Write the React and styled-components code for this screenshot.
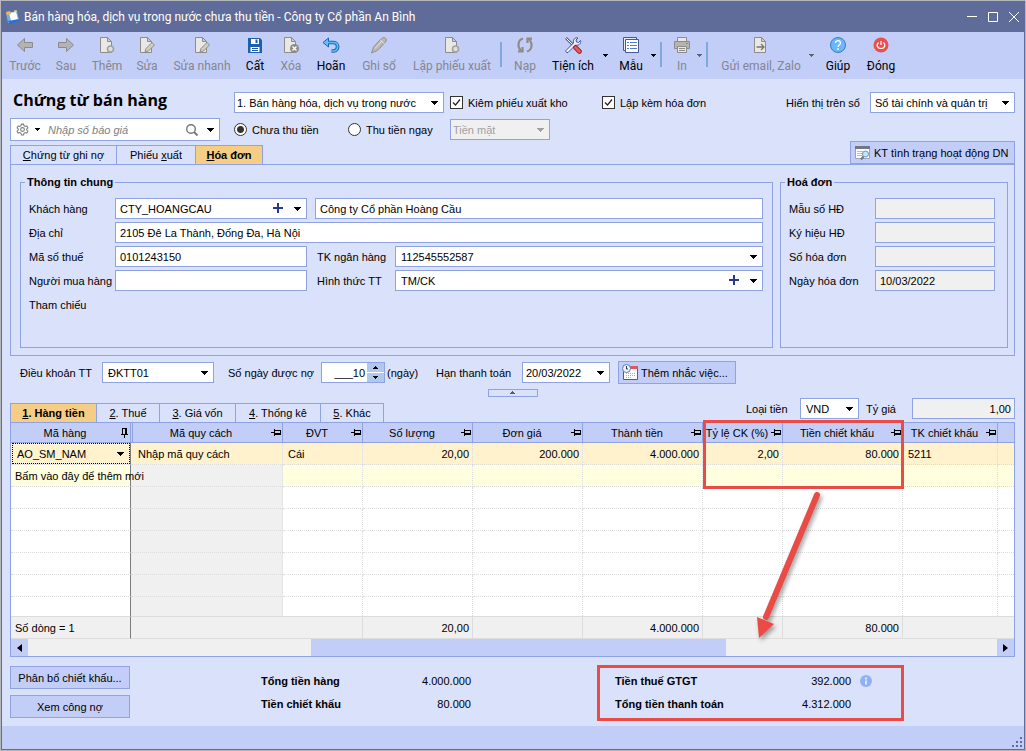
import React from 'react';
import styled, { createGlobalStyle, css } from 'styled-components';

const line = '#8fa3e2';
const bar = '#c2cef8';
const page = '#dae1fb';
const frame = '#5f6c99';
const marker = '#ea4b46';

const GlobalStyle = createGlobalStyle`
	*, *::before, *::after {
		box-sizing: border-box;
	}

	body {
		margin: 0;
		font-family: 'Liberation Sans', Arial, sans-serif;
		font-size: 11px;
		line-height: 14px;
		color: #000000;
	}

	button, input, select {
		margin: 0;
		padding: 0;
		border: 0;
		border-radius: 0;
		background: none;
		font: inherit;
		color: inherit;
	}
`;

// Window
const Outline = styled.div`
	min-height: 100vh;
	display: flex;
	border: 1px solid #b4b8bc;
`;

const Window = styled.div`
	flex: 1;
	min-width: 0;
	display: flex;
	flex-direction: column;
	border: 1px solid ${frame};
	background-color: ${page};
`;

const TitleBar = styled.header`
	height: 30px;
	display: flex;
	align-items: center;
	padding-left: 3px;
	background-color: ${frame};
	color: #ffffff;
	font-family: Roboto, sans-serif;
	font-size: 12px;
`;

const TitleText = styled.div`
	flex: 1;
	padding-left: 3px;
	white-space: nowrap;
`;

const WindowButton = styled.button`
	width: 21px;
	height: 24px;
	display: flex;
	align-items: center;
	justify-content: center;
`;

const StatusBar = styled.footer`
	height: 23px;
	margin-top: auto;
	display: flex;
	align-items: flex-end;
	justify-content: flex-end;
	background-color: ${bar};
`;

// Toolbar
const Toolbar = styled.nav`
	height: 47px;
	display: flex;
	padding-left: 1px;
	background-color: ${bar};
`;

const ToolButton = styled.button`
	width: ${props => props.$width}px;
	margin-left: ${props => (props.$spaced ? 4 : 0)}px;
	flex-shrink: 0;
	display: flex;
	flex-direction: column;
	align-items: center;
	gap: 4px;
	padding-top: 4px;
	font-family: Roboto, sans-serif;
	font-size: 12px;
	line-height: 16px;
	white-space: nowrap;
	color: ${props => (props.disabled ? '#85868f' : '#000000')};
`;

const ToolArrow = styled.button`
	width: 8px;
	flex-shrink: 0;
	display: flex;
	justify-content: center;
	padding-top: 22px;
	color: ${props => (props.disabled ? '#5d6570' : '#000000')};
`;

const ToolDivider = styled.div`
	width: 2px;
	height: 25px;
	margin: 10px 3px;
	flex-shrink: 0;
	background-color: #7fa8dc;
`;

// Form parts
const Content = styled.main`
	padding: 13px 9px 5px 8px;
`;

const Header = styled.div`
	display: grid;
	grid-template-columns: 210px 1fr;
	grid-template-rows: 21px 23px;
	gap: 5px 14px;
`;

const Heading = styled.h1`
	margin: 0 0 0 3px;
	font-family: 'Open Sans', sans-serif;
	font-size: 16px;
	font-weight: 700;
	line-height: 16px;
	white-space: nowrap;
`;

const HeaderRow = styled.div`
	display: flex;
	align-items: center;
`;

const Check = styled.label`
	width: ${props => props.$width}px;
	display: flex;
	align-items: center;
	gap: 5px;
	white-space: nowrap;
`;

const CheckBox = styled.input.attrs({ type: 'checkbox' })`
	appearance: none;
	width: 13px;
	height: 13px;
	margin-left: 6px;
	border: 1px solid #333333;
	background-color: #ffffff;
`;

const CheckMark = styled.span`
	position: relative;
	display: flex;

	svg {
		position: absolute;
		left: 8px;
		top: 2px;
		visibility: hidden;
		pointer-events: none;
	}

	input:checked + svg {
		visibility: visible;
	}
`;

const Radio = styled.input.attrs({ type: 'radio' })`
	appearance: none;
	width: 13px;
	height: 13px;
	border: 1px solid #333333;
	border-radius: 50%;
	background-color: #ffffff;

	&:checked {
		background-image: radial-gradient(circle, #333333 0 3px, transparent 4px);
	}
`;

const Box = styled.div`
	position: relative;
	height: 21px;
	width: ${props => (props.$width ? `${props.$width}px` : 'auto')};
	flex-shrink: 0;
	display: flex;
	border: 1px solid ${line};
	background-color: ${props => (props.$disabled ? '#f0f0f0' : '#ffffff')};
	color: ${props => (props.$disabled ? '#a0a0a0' : '#000000')};
`;

const Select = styled.select`
	appearance: none;
	flex: 1;
	min-width: 0;
	padding-left: ${props => props.$indent || 4}px;
	opacity: 1;
	outline: none;
`;

const BoxInput = styled.input`
	flex: 1;
	min-width: 0;
	padding-right: 2px;
	text-align: right;
	outline: none;
`;

const BoxArrow = styled.span`
	position: absolute;
	right: 5px;
	top: 8px;
	display: flex;
	pointer-events: none;
`;

const PlusButton = styled.button`
	position: absolute;
	right: 21px;
	top: 3px;
	width: 13px;
	height: 13px;
	display: flex;
	align-items: center;
	justify-content: center;
`;

const Input = styled.input`
	height: 21px;
	width: ${props => (props.$width ? `${props.$width}px` : '100%')};
	min-width: 0;
	padding: 0 3px 0 4px;
	border: 1px solid ${line};
	background-color: ${props => (props.readOnly ? '#f0f0f0' : '#ffffff')};
	text-align: ${props => props.$align || 'left'};
	outline: none;
`;

const SearchBox = styled.div`
	display: flex;
	align-items: center;
	padding: 0 5px;
	border: 1px solid ${line};
	background-color: #ffffff;

	input {
		flex: 1;
		min-width: 0;
		padding-left: 7px;
		font-style: italic;
		outline: none;
	}

	input::placeholder {
		color: #808080;
	}

	button {
		display: flex;
		align-items: center;
		height: 21px;
		padding-right: 5px;
	}

	button:last-child {
		padding: 0 0 0 3px;
	}
`;

const TabBar = styled.div`
	display: flex;
	align-items: flex-end;
	justify-content: space-between;
	height: ${props => props.$height}px;
	margin-top: 1px;
`;

const Tabs = styled.div`
	display: flex;
	border-left: 1px solid ${line};
`;

const Tab = styled.button`
	width: ${props => props.$width}px;
	height: 19px;
	border-top: 1px solid ${line};
	border-right: 1px solid ${line};
	text-align: center;
	white-space: nowrap;
	${props =>
		props.$active &&
		css`
			background-color: #f6cd85;
			font-weight: 700;
		`}
`;

const PushButton = styled.button`
	height: 23px;
	width: ${props => props.$width}px;
	flex-shrink: 0;
	display: flex;
	align-items: center;
	justify-content: ${props => (props.$icon ? 'flex-start' : 'center')};
	gap: 2px;
	padding-left: ${props => (props.$icon ? 3 : 0)}px;
	border: 1px solid ${line};
	background-color: ${bar};
	white-space: nowrap;
`;

const Panel = styled.section`
	display: flex;
	gap: 7px;
	padding: 10px 6px 7px 9px;
	border: 1px solid ${line};
`;

const Group = styled.fieldset`
	min-width: 0;
	flex: ${props => (props.$width ? `0 0 ${props.$width}px` : 1)};
	margin: 0;
	padding: 9px 9px 32px 8px;
	border: 1px solid ${line};
`;

const GroupTitle = styled.legend`
	margin-left: -4px;
	padding: 0 2px;
	font-weight: 700;
`;

const Fields = styled.div`
	display: grid;
	grid-template-columns: ${props => props.$columns};
	grid-auto-rows: 21px;
	row-gap: 3px;
	align-items: center;
`;

const Label = styled.label`
	width: ${props => (props.$width ? `${props.$width}px` : 'auto')};
	padding-left: ${props => (props.$second ? 10 : 0)}px;
	flex-shrink: 0;
	white-space: nowrap;
`;

const Wide = styled.div`
	display: flex;
	grid-column: ${props => props.$from} / -1;
	margin-left: ${props => (props.$from === 3 ? 8 : 0)}px;
`;

const TermsRow = styled.div`
	display: flex;
	align-items: center;
	height: 23px;
	margin-top: 5px;
	padding-left: 10px;
`;

const Space = styled.span`
	width: ${props => props.$width}px;
	flex-shrink: 0;
`;

const Push = styled.span`
	flex: 1;
`;

const Steppers = styled.div`
	width: 17px;
	display: flex;
	flex-direction: column;
	gap: 1px;

	button {
		flex: 1;
		display: flex;
		align-items: center;
		justify-content: center;
		background-color: #b0c8ee;
	}
`;

const Collapse = styled.button`
	width: 50px;
	height: 8px;
	display: flex;
	align-items: center;
	justify-content: center;
	margin: 5px auto 0;
	border: 1px solid ${line};
	color: #555e66;
`;

const Currency = styled.div`
	display: flex;
	align-items: center;
	align-self: flex-start;
`;

// Item grid
const GridFrame = styled.div`
	position: relative;
	border: 1px solid ${line};
	background-color: #ffffff;
`;

const Table = styled.table`
	width: 100%;
	table-layout: fixed;
	border-collapse: separate;
	border-spacing: 0;

	th, td {
		padding: 0;
		white-space: nowrap;
	}
`;

const HeadCell = styled.th`
	height: 20px;
	border-right: ${props => (props.$last ? 0 : 1)}px solid ${line};
	border-bottom: 1px solid ${line};
	background-color: ${bar};
	font-weight: 400;
	${props => props.$second && `box-shadow: inset 1px 0 ${bar}, inset 2px 0 ${line};`}

	div {
		display: flex;
		align-items: center;
	}

	span {
		flex: 1;
		min-width: 0;
	}

	svg {
		flex-shrink: 0;
	}
`;

const rowColors = { active: '#fff2cd', fresh: '#ffffe0', empty: '#ffffff' };

const Cell = styled.td`
	height: ${props => (props.$short ? 19 : 22)}px;
	border-right: ${props => (props.$last ? 0 : 1)}px ${props => (props.$frozen ? 'solid #7c7c7c' : 'dotted #dcdcdc')};
	border-bottom: ${props => (props.$short ? 0 : 1)}px dotted #dcdcdc;
	background-color: ${props => (props.$gray ? '#f0f0f0' : rowColors[props.$kind])};
	text-align: ${props => props.$align || 'left'};

	&& {
		padding: 0 ${props => (props.$picker ? 0 : 3)}px 0 ${props => props.$indent || 5}px;
	}
`;

const ItemPicker = styled.div`
	position: relative;
	height: 21px;
	display: flex;
	border: 1px dotted #000000;
`;

const FootCell = styled.td`
	height: 23px;
	border-top: 1px solid #dcdcdc;
	border-bottom: 1px solid #dcdcdc;
	border-right: ${props => (props.$plain ? '0' : '1px')} solid ${props => (props.$frozen ? '#7c7c7c' : '#dcdcdc')};
	background-color: #f0f0f0;
	text-align: ${props => (props.$frozen ? 'left' : 'right')};

	&& {
		padding: 0 3px 0 4px;
	}
`;

const ScrollBar = styled.div`
	display: flex;
	height: 17px;
	background-color: #f0f0f0;

	button {
		width: 17px;
		display: flex;
		align-items: center;
		justify-content: center;
		background-color: ${bar};
	}
`;

const ScrollTrack = styled.div`
	flex: 1;
	display: grid;
	grid-template-columns: 283fr 415fr 271fr;
`;

const ScrollThumb = styled.div`
	grid-column: 2;
	background-color: ${bar};
`;

// Marks drawn over the grid
const Highlight = styled.div`
	position: absolute;
	left: 692px;
	top: -3px;
	width: 201px;
	height: 69px;
	border: 3px solid ${marker};
	pointer-events: none;
`;

const Pointer = styled.svg`
	position: absolute;
	left: 739px;
	top: 64px;
	pointer-events: none;
	filter: drop-shadow(2px 3px 2px rgba(0, 0, 0, 0.35));
`;

// Totals
const Summary = styled.div`
	display: flex;
	margin-top: 8px;
`;

const Actions = styled.div`
	width: 251px;
	display: flex;
	flex-direction: column;
	gap: 6px;
	padding-top: 1px;
`;

const Totals = styled.dl`
	width: ${props => (props.$marked ? 307 : 210)}px;
	margin: 0 ${props => (props.$marked ? 0 : 126)}px 0 0;
	padding: ${props => (props.$marked ? '1px 26px 3px 15px' : '4px 0 6px')};
	border: ${props => (props.$marked ? `3px solid ${marker}` : '0')};
`;

const Total = styled.div`
	display: flex;
	align-items: center;
	height: 23px;

	dt {
		flex: 1;
		font-weight: 700;
	}

	dd {
		margin: 0 ${props => (props.$marked ? 9 : 0)}px 0 0;
	}
`;

const InfoSlot = styled.span`
	width: 15px;
	display: flex;
`;

// Icons
const Down = ({ small }) => (
	<svg width="7" height="4" viewBox="0 0 7 4" shapeRendering="crispEdges">
		<path d={small ? 'M1 0h5v1h-1v1h-1v1h-1v-1h-1v-1h-1z' : 'M0 0h7v1h-1v1h-1v1h-1v1h-1v-1h-1v-1h-1v-1h-1z'} fill="currentColor" />
	</svg>
);

const Up = () => (
	<svg width="7" height="4" viewBox="0 0 7 4" shapeRendering="crispEdges">
		<path d="M3 0h1v1h1v1h1v1h-5v-1h1v-1h1z" fill="currentColor" />
	</svg>
);

const Plus = () => (
	<svg width="11" height="11" viewBox="0 0 11 11" shapeRendering="crispEdges">
		<path d="M0 4h4V0h2v4h4v2H6v4H4V6H0z" fill="#24398c" />
	</svg>
);

const Pin = ({ fixed }) => (
	<svg width="11" height="11" viewBox="0 0 11 11" shapeRendering="crispEdges">
		<g transform={fixed ? 'rotate(-90 5.5 5.5)' : undefined} fill="#000000">
			<path d="M0 5h4v1H0zM3 2h1v7H3zM4 3h6v1H4zM9 3h1v5H9zM4 6h6v2H4z" />
		</g>
	</svg>
);

const PageBase = () => (
	<path d="M2.500 1.500h7l4 4v11h-11zM9.500 1.500v4h4" fill="#e9e8e4" stroke="#8d8c88" />
);

const icons = {
	back: <path d="M1.500 9L8.500 2.500v4h8v5h-8v4z" fill="#b3b3b3" stroke="#8b8b8b" />,
	next: <path d="M16.500 9L9.500 2.500v4h-8v5h8v4z" fill="#b3b3b3" stroke="#8b8b8b" />,
	add: (
		<>
			<PageBase />
			<circle cx="12.500" cy="13" r="3" fill="#dedede" stroke="#a2a2a2" strokeWidth="1.600" />
		</>
	),
	edit: (
		<>
			<PageBase />
			<path d="M7 16l1-3.500 6-6 2.500 2.500-6 6z" fill="#cfcdc6" stroke="#908e88" />
		</>
	),
	save: (
		<>
			<path d="M2 2h12l2 2v13H2z" fill="#1d5fae" />
			<path d="M5 3h8v5H5zM4.500 11h9v5h-9z" fill="#ffffff" />
			<path d="M9.500 3.500h2v3.500h-2zM6 12h6v1H6zM6 14h6v1H6z" fill="#1d5fae" />
		</>
	),
	remove: (
		<>
			<PageBase />
			<circle cx="12.500" cy="12.500" r="4.500" fill="#8c8b87" />
			<path d="M10.500 10.500l4 4m0-4l-4 4" stroke="#ffffff" strokeWidth="1.300" />
		</>
	),
	undo: (
		<>
			<path d="M3 6.500h8.500c5.500 0 5.500 8.500 0 8.500h-2" fill="none" stroke="#1567bd" strokeWidth="3.600" />
			<path d="M1 6.500L6.500 2v9z" fill="#6bbcf2" stroke="#1567bd" />
			<path d="M5 6.500h6.500c5.500 0 5.500 8.500 0 8.500h-1.500" fill="none" stroke="#6bbcf2" strokeWidth="1.600" />
		</>
	),
	pen: (
		<>
			<path d="M1.500 17l2-6 8-8.500c3-2.500 6.500.500 4 3.500l-8 8.500z" fill="#b9b8b5" stroke="#92918d" />
			<path d="M5 12.500l7-7.500M10.500 4l3.500 3.500" stroke="#e5e4e1" />
		</>
	),
	reload: (
		<g fill="none" stroke="#8d8c86" strokeWidth="2.200">
			<path d="M7 2.500C1.500 4 1 11.500 5.500 15M11 15.500C16.500 14 17 6.500 12.500 3" />
			<path d="M2 15.300h4.500V11M16 2.700h-4.500V7" />
		</g>
	),
	tools: (
		<>
			<path d="M2 2l9 9" stroke="#5b5f9e" strokeWidth="2.600" />
			<path d="M2.500 2.500l8.500 8.500" stroke="#ffffff" />
			<path d="M2 14.500l7.500-7.500c-1-3 1.500-6 4.500-5l-2 2 .5 2 2 .5 2-2c1 3-2 5.500-5 4.500l-7.500 7.500c-1.500.5-2.500-.5-2-2z" fill="#eef1ff" stroke="#4b5193" />
			<path d="M11.500 11.500l4 4" stroke="#9d2525" strokeWidth="4.600" strokeLinecap="round" />
			<path d="M11.500 11.500l4 4" stroke="#ee5a52" strokeWidth="2.600" strokeLinecap="round" />
		</>
	),
	form: (
		<>
			<path d="M1.500 1.500h13v13h-13z" fill="#e6eaff" stroke="#4c5594" />
			<path d="M3.500 3.500h13v13h-13z" fill="#ffffff" stroke="#4c5594" />
			<path d="M5 6.500h2M5 9.500h2M5 12.500h2M8 6.500h7M8 9.500h7M8 12.500h7" stroke="#4c7fd0" />
		</>
	),
	print: (
		<>
			<path d="M4.500 1.500h9v5h-9z" fill="#e9e8e4" stroke="#8d8c88" />
			<path d="M1.500 5.500h15v7h-15z" fill="#b5b4b0" stroke="#8d8c88" />
			<path d="M4.500 10.500h9v6h-9z" fill="#e9e8e4" stroke="#8d8c88" />
			<path d="M6 12.500h6M6 14.500h6M13 7.500h2" stroke="#8d8c88" />
		</>
	),
	send: (
		<>
			<PageBase />
			<path d="M4.500 11h7M9 8l3 3-3 3" fill="none" stroke="#77766f" strokeWidth="1.300" />
		</>
	),
	help: (
		<>
			<circle cx="9" cy="9" r="7.500" fill="#6db7f8" stroke="#2d7fd0" />
			<path d="M6.500 7c0-3.300 5-3.300 5 0 0 2-2.500 2-2.500 4" fill="none" stroke="#ffffff" strokeWidth="1.300" />
			<circle cx="9" cy="13" r=".9" fill="#ffffff" />
		</>
	),
	close: (
		<>
			<circle cx="9" cy="9" r="7.500" fill="#ea4f4c" />
			<path d="M6.500 6.500c-3 3-.5 6 2.500 6s5.500-3 2.500-6M9 5v4" fill="none" stroke="#ffffff" strokeWidth="1.200" />
		</>
	),
};

const ToolIcon = ({ name }) => (
	<svg width="18" height="18" viewBox="0 0 18 18">
		{icons[name]}
	</svg>
);

const AppIcon = () => (
	<svg width="16" height="16" viewBox="0 0 16 16">
		<path d="M1 4l11-2 2 9-11 3z" fill="#74aee8" />
		<path d="M3 12l10-2 2 2-10 3z" fill="#2e6fd0" />
		<path d="M4 4l7-1 2 7-7 1.500z" fill="#ffffff" />
		<path d="M1 3l4-1 1 3-4 1z" fill="#f3b73b" />
		<path d="M9 1.500l2.500-.5.5 2-2.500.5z" fill="#f6d56c" />
	</svg>
);

const Gear = () => (
	<svg width="13" height="13" viewBox="0 0 24 24" fill="none" stroke="#7d7d7d" strokeWidth="2">
		<path d="M10 2h4l.7 3 2.300 1.300L20 5.400l2 3.500L19.800 11v2l2.200 2.100-2 3.500-3-.9-2.300 1.300-.7 3h-4l-.7-3L7 17.700l-3 .9-2-3.500L4.200 13v-2L2 8.900l2-3.500 3 .9L9.300 5z" />
		<circle cx="12" cy="12" r="3.500" />
	</svg>
);

const Magnifier = () => (
	<svg width="14" height="14" viewBox="0 0 14 14" fill="none" stroke="#777777" strokeWidth="1.400">
		<circle cx="6" cy="6" r="4.300" />
		<path d="M9 9l3.500 3.500" strokeWidth="1.800" />
	</svg>
);

const CheckSheet = () => (
	<svg width="18" height="16" viewBox="0 0 18 16">
		<path d="M1.500 2.500h14v11h-14z" fill="#ffffff" stroke="#9aa3b5" />
		<path d="M1 1h15v3H1z" fill="#707786" />
		<path d="M3 6.500h6M3 8.500h6M3 10.500h5" stroke="#9cc0e8" />
		<circle cx="11.500" cy="9" r="3" fill="#c9e4fa" stroke="#6a96c0" />
		<path d="M9.500 11.500L7 14.500" stroke="#6f7682" strokeWidth="2" />
	</svg>
);

const Reminder = () => (
	<svg width="17" height="17" viewBox="0 0 17 17">
		<path d="M1.500 3.500h14v12h-14z" fill="#ffffff" stroke="#53588e" />
		<path d="M8 2h8v3H8z" fill="#e2574f" />
		<path d="M4 9.500h10M4 11.500h10M4 13.500h6" stroke="#a5acb8" strokeDasharray="1 1" />
		<circle cx="4.500" cy="4.500" r="4" fill="#eef4ff" stroke="#5f79ad" />
		<path d="M4.500 2v3H6" fill="none" stroke="#27365c" />
	</svg>
);

const Info = () => (
	<svg width="12" height="12" viewBox="0 0 12 12">
		<circle cx="6" cy="6" r="6" fill="#8fb0f2" />
		<path d="M5 2.500h2v2H5zM5 5.500h2v4H5z" fill="#dfe8ff" />
	</svg>
);

const Grip = () => (
	<svg width="12" height="12" viewBox="0 0 12 12" fill="#5f6c99" shapeRendering="crispEdges">
		<path d="M8 0h2v2H8zM4 4h2v2H4zM8 4h2v2H8zM0 8h2v2H0zM4 8h2v2H4zM8 8h2v2H8z" />
	</svg>
);

const Combo = ({ id, label, value, width, indent, disabled, plus }) => (
	<Box $width={width} $disabled={disabled}>
		<Select id={id} aria-label={label} disabled={disabled} $indent={indent}>
			<option>{value}</option>
		</Select>
		{plus && (
			<PlusButton aria-label="Thêm">
				<Plus />
			</PlusButton>
		)}
		<BoxArrow>
			<Down />
		</BoxArrow>
	</Box>
);

const Tick = ({ width, children }) => (
	<Check $width={width}>
		<CheckMark>
			<CheckBox defaultChecked />
			<svg width="9" height="9" viewBox="0 0 9 9">
				<path d="M1 4.500L3.500 7 8 1.500" fill="none" stroke="#222222" strokeWidth="1.200" />
			</svg>
		</CheckMark>
		{children}
	</Check>
);

const tools = [
	{ icon: 'back', text: 'Trước', width: 44, off: true },
	{ icon: 'next', text: 'Sau', width: 38, off: true },
	{ icon: 'add', text: 'Thêm', width: 44, off: true },
	{ icon: 'edit', text: 'Sửa', width: 36, off: true },
	{ icon: 'edit', text: 'Sửa nhanh', width: 74, off: true },
	{ icon: 'save', text: 'Cất', width: 32 },
	{ icon: 'remove', text: 'Xóa', width: 40, off: true },
	{ icon: 'undo', text: 'Hoãn', width: 40 },
	{ icon: 'pen', text: 'Ghi sổ', width: 56, off: true },
	{ icon: 'add', text: 'Lập phiếu xuất', width: 90, off: true, divider: true },
	{ icon: 'reload', text: 'Nạp', width: 40, off: true },
	{ icon: 'tools', text: 'Tiện ích', width: 56, menu: true },
	{ icon: 'form', text: 'Mẫu', width: 36, menu: true, divider: true, spaced: true },
	{ icon: 'print', text: 'In', width: 26, off: true, menu: true, divider: true, spaced: true },
	{ icon: 'send', text: 'Gửi email, Zalo', width: 92, off: true, menu: true, spaced: true },
	{ icon: 'help', text: 'Giúp', width: 46 },
	{ icon: 'close', text: 'Đóng', width: 40 },
];

const detailTabs = [
	{ key: '1', text: '. Hàng tiền', width: 86 },
	{ key: '2', text: '. Thuế', width: 63 },
	{ key: '3', text: '. Giá vốn', width: 76 },
	{ key: '4', text: '. Thống kê', width: 85 },
	{ key: '5', text: '. Khác', width: 63 },
];

// value: first row, total: footer row
const columns = [
	{ name: 'Mã hàng', width: 120, total: 'Số dòng = 1' },
	{ name: 'Mã quy cách', width: 152, value: 'Nhập mã quy cách', indent: 7 },
	{ name: 'ĐVT', width: 80, value: 'Cái' },
	{ name: 'Số lượng', width: 110, value: '20,00', total: '20,00', align: 'right' },
	{ name: 'Đơn giá', width: 110, value: '200.000', align: 'right' },
	{ name: 'Thành tiền', width: 120, value: '4.000.000', total: '4.000.000', align: 'right' },
	{ name: 'Tỷ lệ CK (%)', width: 80, value: '2,00', align: 'right' },
	{ name: 'Tiền chiết khấu', width: 120, value: '80.000', total: '80.000', align: 'right' },
	{ name: 'TK chiết khấu', width: 95, value: '5211' },
	{ name: '' },
];

const rows = ['active', 'fresh', 'empty', 'empty', 'empty', 'empty', 'empty', 'empty'];

const cellContent = (column, index, kind) => {
	if (kind === 'active' && index > 0) return column.value;
	if (kind === 'fresh' && index === 0) return 'Bấm vào đây để thêm mới';
	return null;
};

const ItemGrid = () => (
	<GridFrame>
		<Table>
			<colgroup>
				{columns.map(column => (
					<col key={column.name} width={column.width} />
				))}
			</colgroup>
			<thead>
				<tr>
					{columns.map((column, index) => (
						<HeadCell key={column.name} $second={index === 1} $last={!column.name}>
							{column.name && (
								<div>
									<span>{column.name}</span>
									<Pin fixed={index === 0} />
								</div>
							)}
						</HeadCell>
					))}
				</tr>
			</thead>
			<tbody>
				{rows.map((kind, row) => (
					<tr key={row}>
						{columns.map((column, index) => {
							const picker = kind === 'active' && index === 0;
							return (
								<Cell
									key={column.name}
									$kind={kind}
									$frozen={index === 0}
									$gray={index === 1 && kind !== 'active'}
									$short={row === rows.length - 1}
									$last={!column.name}
									$align={column.align}
									$indent={index === 0 ? (picker ? 1 : 4) : column.indent}
									$picker={picker}
								>
									{picker ? (
										<ItemPicker>
											<Select aria-label="Mã hàng" $indent={4}>
												<option>AO_SM_NAM</option>
											</Select>
											<BoxArrow>
												<Down />
											</BoxArrow>
										</ItemPicker>
									) : (
										cellContent(column, index, kind)
									)}
								</Cell>
							);
						})}
					</tr>
				))}
			</tbody>
			<tfoot>
				<tr>
					{columns.map((column, index) => (
						<FootCell key={column.name} $frozen={index === 0} $plain={index === 1 || index > 7}>
							{column.total}
						</FootCell>
					))}
				</tr>
			</tfoot>
		</Table>
		<ScrollBar>
			<button aria-label="Cuộn trái">
				<svg width="5" height="8" viewBox="0 0 5 8">
					<path d="M5 0v8L0 4z" />
				</svg>
			</button>
			<ScrollTrack>
				<ScrollThumb />
			</ScrollTrack>
			<button aria-label="Cuộn phải">
				<svg width="5" height="8" viewBox="0 0 5 8">
					<path d="M0 0v8l5-4z" />
				</svg>
			</button>
		</ScrollBar>
		<Highlight />
		<Pointer width="80" height="160" viewBox="0 0 80 160">
			<path d="M67 8L16 130" stroke={marker} strokeWidth="6" strokeLinecap="round" />
			<path d="M9 151L7 130l17 7z" fill={marker} />
		</Pointer>
	</GridFrame>
);

const App = () => (
	<>
		<GlobalStyle />
		<Outline>
			<Window>
				<TitleBar>
					<AppIcon />
					<TitleText>Bán hàng hóa, dịch vụ trong nước chưa thu tiền - Công ty Cổ phần An Bình</TitleText>
					<WindowButton aria-label="Thu nhỏ">
						<svg width="10" height="10" viewBox="0 0 10 10">
							<path d="M0 4.500h10" stroke="#ffffff" />
						</svg>
					</WindowButton>
					<WindowButton aria-label="Phóng to">
						<svg width="10" height="10" viewBox="0 0 10 10">
							<path d="M.5.5h9v9h-9z" fill="none" stroke="#ffffff" />
						</svg>
					</WindowButton>
					<WindowButton aria-label="Đóng cửa sổ">
						<svg width="10" height="10" viewBox="0 0 10 10">
							<path d="M0 0l10 10M10 0L0 10" stroke="#ffffff" />
						</svg>
					</WindowButton>
				</TitleBar>

				<Toolbar>
					{tools.map(tool => (
						<React.Fragment key={tool.text}>
							<ToolButton $width={tool.width} $spaced={tool.spaced} disabled={tool.off}>
								<ToolIcon name={tool.icon} />
								{tool.text}
							</ToolButton>
							{tool.menu && (
								<ToolArrow disabled={tool.off} aria-label={tool.text}>
									<Down small />
								</ToolArrow>
							)}
							{tool.divider && <ToolDivider />}
						</React.Fragment>
					))}
				</Toolbar>

				<Content>
					<Header>
						<Heading>Chứng từ bán hàng</Heading>
						<HeaderRow>
							<Combo label="Loại chứng từ" value="1. Bán hàng hóa, dịch vụ trong nước" width={210} indent={2} />
							<Tick width={152}>Kiêm phiếu xuất kho</Tick>
							<Tick width={152}>Lập kèm hóa đơn</Tick>
							<Push />
							<Label htmlFor="book" $width={84}>
								Hiển thị trên sổ
							</Label>
							<Combo id="book" value="Sổ tài chính và quản trị" width={145} />
						</HeaderRow>
						<SearchBox>
							<button aria-label="Thiết lập">
								<Gear />
							</button>
							<Down small />
							<input aria-label="Số báo giá" placeholder="Nhập số báo giá" />
							<button aria-label="Tìm">
								<Magnifier />
							</button>
							<button aria-label="Danh sách">
								<Down />
							</button>
						</SearchBox>
						<HeaderRow>
							<Check $width={114}>
								<Radio name="payment" defaultChecked />
								Chưa thu tiền
							</Check>
							<Check $width={102}>
								<Radio name="payment" />
								Thu tiền ngay
							</Check>
							<Combo label="Hình thức thu" value="Tiền mặt" width={100} indent={2} disabled />
						</HeaderRow>
					</Header>

					<TabBar $height={22}>
						<Tabs>
							<Tab $width={106}>
								<u>C</u>hứng từ ghi nợ
							</Tab>
							<Tab $width={79}>
								Phiếu <u>x</u>uất
							</Tab>
							<Tab $width={67} $active>
								<u>H</u>óa đơn
							</Tab>
						</Tabs>
						<PushButton $width={165} $icon>
							<CheckSheet />
							KT tình trạng hoạt động DN
						</PushButton>
					</TabBar>

					<Panel>
						<Group>
							<GroupTitle>Thông tin chung</GroupTitle>
							<Fields $columns="86px 192px 88px 1fr">
								<Label htmlFor="customer">Khách hàng</Label>
								<Combo id="customer" value="CTY_HOANGCAU" plus />
								<Wide $from={3}>
									<Input aria-label="Tên khách hàng" defaultValue="Công ty Cổ phần Hoàng Cầu" />
								</Wide>
								<Label htmlFor="address">Địa chỉ</Label>
								<Wide $from={2}>
									<Input id="address" defaultValue="2105 Đê La Thành, Đống Đa, Hà Nội" />
								</Wide>
								<Label htmlFor="tax">Mã số thuế</Label>
								<Input id="tax" defaultValue="0101243150" />
								<Label htmlFor="bank" $second>
									TK ngân hàng
								</Label>
								<Combo id="bank" value="112545552587" indent={5} />
								<Label htmlFor="buyer">Người mua hàng</Label>
								<Input id="buyer" />
								<Label htmlFor="method" $second>
									Hình thức TT
								</Label>
								<Combo id="method" value="TM/CK" indent={5} plus />
								<Label as="span">Tham chiếu</Label>
							</Fields>
						</Group>
						<Group $width={228}>
							<GroupTitle>Hoá đơn</GroupTitle>
							<Fields $columns="86px 120px">
								<Label htmlFor="template">Mẫu số HĐ</Label>
								<Input id="template" readOnly />
								<Label htmlFor="series">Ký hiệu HĐ</Label>
								<Input id="series" readOnly />
								<Label htmlFor="number">Số hóa đơn</Label>
								<Input id="number" readOnly />
								<Label htmlFor="date">Ngày hóa đơn</Label>
								<Input id="date" defaultValue="10/03/2022" readOnly />
							</Fields>
						</Group>
					</Panel>

					<TermsRow>
						<Label htmlFor="terms" $width={82}>
							Điều khoản TT
						</Label>
						<Combo id="terms" value="ĐKTT01" width={112} indent={5} />
						<Space $width={14} />
						<Label htmlFor="days" $width={93}>
							Số ngày được nợ
						</Label>
						<Box $width={64}>
							<BoxInput id="days" defaultValue="___10" />
							<Steppers>
								<button aria-label="Tăng">
									<Up />
								</button>
								<button aria-label="Giảm">
									<Down small />
								</button>
							</Steppers>
						</Box>
						<Space $width={2} />
						<Label as="span" $width={49}>
							(ngày)
						</Label>
						<Label htmlFor="due" $width={86}>
							Hạn thanh toán
						</Label>
						<Combo id="due" value="20/03/2022" width={88} indent={3} />
						<Space $width={8} />
						<PushButton $width={118} $icon>
							<Reminder />
							Thêm nhắc việc...
						</PushButton>
					</TermsRow>

					<Collapse aria-label="Thu gọn">
						<Up />
					</Collapse>

					<TabBar $height={24}>
						<Tabs>
							{detailTabs.map((tab, index) => (
								<Tab key={tab.key} $width={tab.width} $active={index === 0}>
									<u>{tab.key}</u>
									{tab.text}
								</Tab>
							))}
						</Tabs>
						<Currency>
							<Label htmlFor="currency" $width={54}>
								Loại tiền
							</Label>
							<Combo id="currency" value="VND" width={59} indent={5} />
							<Space $width={7} />
							<Label htmlFor="rate" $width={46}>
								Tỷ giá
							</Label>
							<Input id="rate" $width={103} $align="right" defaultValue="1,00" readOnly />
						</Currency>
					</TabBar>

					<ItemGrid />

					<Summary>
						<Actions>
							<PushButton $width={120}>Phân bổ chiết khấu...</PushButton>
							<PushButton $width={120}>Xem công nợ</PushButton>
						</Actions>
						<Totals>
							<Total>
								<dt>Tổng tiền hàng</dt>
								<dd>4.000.000</dd>
							</Total>
							<Total>
								<dt>Tiền chiết khấu</dt>
								<dd>80.000</dd>
							</Total>
						</Totals>
						<Totals $marked>
							<Total $marked>
								<dt>Tiền thuế GTGT</dt>
								<dd>392.000</dd>
								<InfoSlot>
									<Info />
								</InfoSlot>
							</Total>
							<Total $marked>
								<dt>Tổng tiền thanh toán</dt>
								<dd>4.312.000</dd>
								<InfoSlot />
							</Total>
						</Totals>
					</Summary>
				</Content>

				<StatusBar>
					<Grip />
				</StatusBar>
			</Window>
		</Outline>
	</>
);

export default App;
